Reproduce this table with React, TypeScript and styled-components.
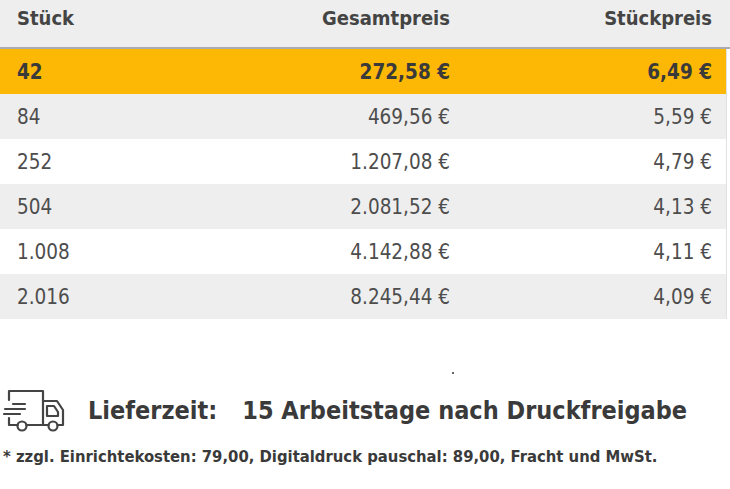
import React from "react";
import styled, { createGlobalStyle } from "styled-components";

const GlobalStyle = createGlobalStyle`
  html, body {
    margin: 0;
    padding: 0;
    background: #ffffff;
  }
  body {
    font-family: "DejaVu Sans Condensed", "DejaVu Sans", sans-serif;
    font-stretch: condensed;
    color: #444444;
  }
`;

const Page = styled.div`
  width: 730px;
  height: 489px;
  overflow: hidden;
`;

const Table = styled.div`
  width: 730px;
`;

const HeaderRow = styled.div`
  display: grid;
  grid-template-columns: 232px 232px 262px;
  align-items: center;
  background: #eeeeee;
  border-bottom: 2px solid #a9adb2;
  padding-bottom: 11px;
  box-sizing: border-box;
  height: 49px;
`;

const Row = styled.div<{ $bg: string; $bold?: boolean }>`
  display: grid;
  grid-template-columns: 232px 232px 262px;
  width: 726px;
  height: 45px;
  align-items: center;
  background: ${(p) => p.$bg};
  border-right: 1px solid #e2e2e2;
  font-weight: ${(p) => (p.$bold ? 700 : 400)};
  color: ${(p) => (p.$bold ? "#3a3a3a" : "#4d4d4d")};
`;

const Cell = styled.div<{ $align?: "left" | "right"; $head?: boolean }>`
  font-size: ${(p) => (p.$head ? "20px" : "20.5px")};
  font-weight: ${(p) => (p.$head ? 700 : "inherit")};
  text-align: ${(p) => p.$align || "left"};
  padding: ${(p) => (p.$align === "right" ? "0 14px 0 0" : "0 0 0 17px")};
  white-space: nowrap;
`;

const Gap = styled.div`
  height: 54px;
  padding-top: 53px;
  box-sizing: border-box;
`;

const Dot = styled.div`
  width: 2px;
  height: 2px;
  background: #333;
  border-radius: 1px;
  margin-left: 452px;
`;

const Delivery = styled.div`
  display: flex;
  align-items: center;
  height: 50px;
  margin-top: 12px;
  padding-left: 3px;
  color: #3a3a3a;
  font-weight: 700;
`;

const TruckIcon = styled.svg`
  width: 70px;
  height: 55px;
  margin-left: -3px;
  flex: none;
`;

const Label = styled.span`
  font-size: 25px;
  margin-left: 18px;
`;

const Value = styled.span`
  font-size: 25px;
  margin-left: 25px;
`;

const Note = styled.div`
  font-size: 16.5px;
  font-weight: 700;
  color: #3a3a3a;
  padding-left: 3px;
  margin-top: 12px;
  white-space: nowrap;
`;

const rows = [
  ["42", "272,58 €", "6,49 €"],
  ["84", "469,56 €", "5,59 €"],
  ["252", "1.207,08 €", "4,79 €"],
  ["504", "2.081,52 €", "4,13 €"],
  ["1.008", "4.142,88 €", "4,11 €"],
  ["2.016", "8.245,44 €", "4,09 €"],
];

function Truck() {
  return (
    <TruckIcon viewBox="0 0 70 55" fill="none" stroke="#444" strokeWidth="2.2" strokeLinecap="round" strokeLinejoin="round">
      <path d="M9 17 V8 H43 V42" />
      <path d="M9 35 V42 H17.5" />
      <path d="M13 21 H25" />
      <path d="M5 26 H25" />
      <path d="M4 31 H20" />
      <circle cx="22" cy="43" r="4.5" />
      <circle cx="53" cy="43" r="4.5" />
      <path d="M26.5 42 H48.5" />
      <path d="M43 18 H57 L63 27 V42 H57.5" />
      <path d="M47 23 H54 L58 29 V33 H47 Z" />
    </TruckIcon>
  );
}

export default function App() {
  return (
    <Page>
      <GlobalStyle />
      <Table>
        <HeaderRow>
          <Cell $head>Stück</Cell>
          <Cell $head $align="right">Gesamtpreis</Cell>
          <Cell $head $align="right">Stückpreis</Cell>
        </HeaderRow>
        {rows.map((r, i) => (
          <Row key={r[0]} $bg={i === 0 ? "#fdb805" : i % 2 === 1 ? "#eeeeee" : "#ffffff"} $bold={i === 0}>
            <Cell>{r[0]}</Cell>
            <Cell $align="right">{r[1]}</Cell>
            <Cell $align="right">{r[2]}</Cell>
          </Row>
        ))}
      </Table>
      <Gap>
        <Dot />
      </Gap>
      <Delivery>
        <Truck />
        <Label>Lieferzeit:</Label>
        <Value>15 Arbeitstage nach Druckfreigabe</Value>
      </Delivery>
      <Note>* zzgl. Einrichtekosten: 79,00, Digitaldruck pauschal: 89,00, Fracht und MwSt.</Note>
    </Page>
  );
}
